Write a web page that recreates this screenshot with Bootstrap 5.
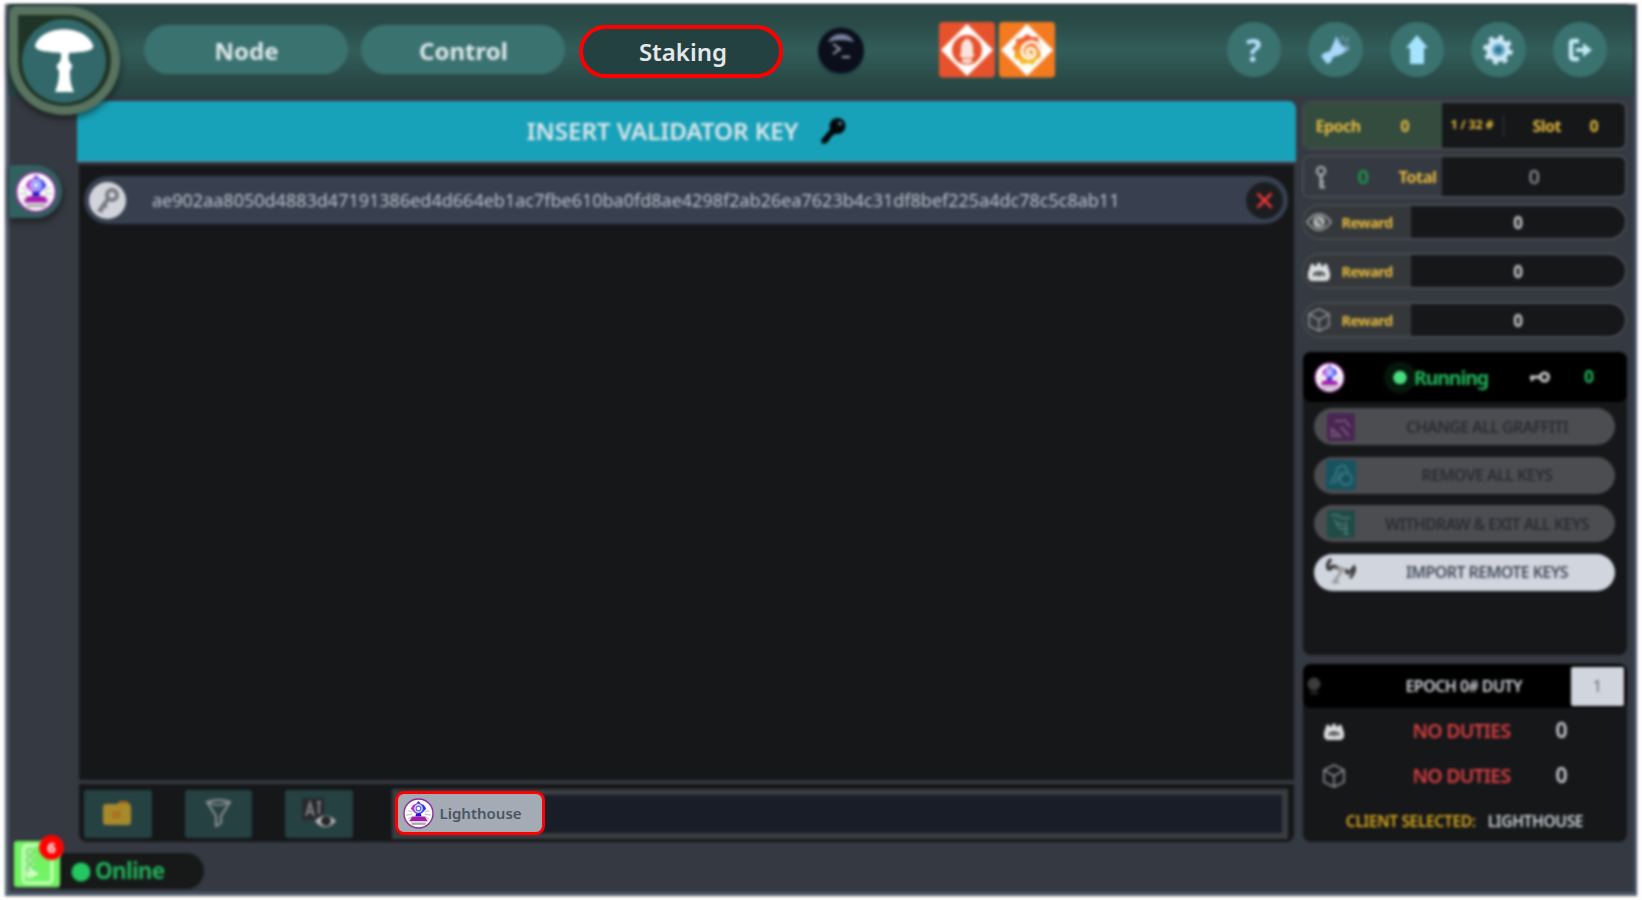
<!DOCTYPE html>
<html lang="en">
<head>
<meta charset="utf-8">
<title>Validator dashboard</title>
<link rel="stylesheet" href="https://cdn.jsdelivr.net/npm/bootstrap@5.3.0/dist/css/bootstrap.min.css">
<script src="https://cdn.jsdelivr.net/npm/bootstrap@5.3.0/dist/js/bootstrap.bundle.min.js"></script>
<style>
body{background:#fdfdfd;height:900px;overflow:hidden;padding:4px 5px 4px 5px;font-family:"Noto Sans",sans-serif;line-height:1;color:#d1d5db}
.soft{filter:blur(1.45px)}
.shell{height:892px;position:relative;isolation:isolate}
.shell::before{content:"";position:absolute;inset:0;z-index:-2;background:#353941;border:1px solid #4b5563;border-left:4px solid #556172;border-right:3px solid #4a5364;border-bottom:4px solid #4f5b6b;filter:blur(1.45px)}
.topbar{height:92px;position:relative;padding-left:139px;z-index:2}
.topbar::before{content:"";position:absolute;inset:1px 4px 0 4px;z-index:-1;background:linear-gradient(#294845 0,#294a47 18%,#325d5a 50%,#294a47 82%,#264442);border-radius:0 8px 0 0;filter:blur(1.45px)}
.brand{position:absolute;left:4px;top:2px;width:111px;height:109px;background:#1f3426;border:9px solid #58735f;border-radius:8px 56px 56px 56px;box-shadow:0 3px 7px #0009}
.brand svg{position:absolute;left:3px;top:3px}
.tabpill{width:204px;height:49px;border-radius:25px;background:#3a7270;font-size:24px;font-weight:700;color:#e0e9ec;margin-top:21px;padding:2px 0 0 1px}
.tabon{height:53px;border:4px solid red;border-radius:27px;background:#244141;color:#e5e7eb;font-weight:600;padding:0 0 0 4px}
.term{width:48px;height:48px;margin-top:23px}
.tile{width:56px;height:56px;margin-top:18px}
.tools{position:absolute;right:30px;top:18px;gap:27px}
.round{width:54.5px;height:55px;border-radius:50%;background:#3a7270}
.rail{width:72px;flex:none}
.tab-side{width:53px;height:53px;margin:69px 0 0 4px;background:#32605f;border-radius:0 27px 27px 0;box-shadow:1px 4px 6px #0007}
.center{width:1219px;flex:none}
.banner{height:61px;margin-top:5px;background:#18a2b9;border-radius:0 8px 0 0;color:#e0e7ec;font-size:24.2px;font-weight:600;letter-spacing:-.07px;border-bottom:1px solid #6b8494}
.list{height:615px;margin:3px 0 0 2px;width:1215px;background:#151719;padding:11px 6px 0 5px}
.keyrow{height:48px;background:#384050;border-radius:24px;padding:0 5px;font-size:18px;color:#bcc3cd}
.disc{width:37px;height:37px;border-radius:50%;background:#d1d5db;flex:none}
.foot{height:58px;width:1215px;margin:4px 0 0 2px;position:relative;padding:5px 6px 0 5px}
.foot::before{content:"";position:absolute;inset:0;z-index:-1;background:#151719;border-radius:0 0 8px 8px;filter:blur(1.45px)}
.tool{width:67.5px;height:48px;background:#264142;border-radius:3px;margin-right:33px;margin-top:1px}
.field{flex:1;position:relative;height:50px;margin-left:6px;padding:2px 0 0 3px}
.field::before{content:"";position:absolute;inset:0;z-index:-1;background:#181d27;border:6px solid #3b3d41;filter:blur(1.45px)}
.chip{width:150px;height:44px;border:3.5px solid red;border-radius:9px;background:#a4abb5;color:#4b5563;font-size:15px;font-weight:600;padding-left:5px}
.side{width:325px;margin:5px 0 0 5.500px;flex:none}
.stat{border:2px solid #484b52;border-radius:8px;background:#151719;overflow:hidden;font-weight:700;color:#e5ba3e}
.stat>div:first-child{width:138px;background:#353941}
.tight{letter-spacing:-.55px}
.pill{height:36px;border-radius:18px;color:#cdd0d4;font-size:17px;letter-spacing:-1px}
.pill>div:last-child{padding-top:1px}
.stat.pill>div:first-child{width:107px;background:#35383b;color:#e5ba3e;font-size:14.5px;letter-spacing:-.55px}
.panel{background:#151719;border-radius:8px;width:324px;margin-left:1px}
.phead{background:#000;border-radius:8px}
.act{height:37px;border-radius:19px;background:#4c4d51;color:#292b30;font-size:16px;letter-spacing:-.6px;font-weight:600;margin:0 12px 11.6px 11px;padding-left:12px;display:flex;align-items:center}
.act svg{flex:none}
.act span{flex:1;text-align:center;padding-left:4px}
.live{background:#d1d5de;color:#3f4957}
.duty{height:45px;font-size:19.5px;letter-spacing:-.75px;font-weight:600;color:#da3e40}
.online{position:absolute;left:54px;top:849px;width:145px;height:36px;border-radius:0 18px 18px 0;background:#161918;color:#22ae59;font-size:22.5px;letter-spacing:-.75px;font-weight:700;padding:1px 0 0 12px}
.note{position:absolute;left:9px;top:837px}
.six{position:absolute;left:34px;top:831px;width:25px;height:25px;border-radius:50%;background:red;color:#fff;font-size:15px;font-weight:700}
</style>
</head>
<body>
<svg width="0" height="0" class="position-absolute">
<symbol id="lh" viewBox="0 0 40 40"><circle cx="20" cy="20" r="18.700" fill="#fff" stroke="#8f2c9c" stroke-width="1.800"/><path d="M6 16l6 2M4 22l8-1M34 16l-6 2M36 22l-8-1M7 27l5-3M33 27l-5-3" stroke="#ccc" stroke-width="1.800"/><path d="M20 4l3 3h-6z" fill="#4a2fc8"/><path d="M20 6l-7 3-3 5 5 5 5 3z" fill="#b535d8"/><path d="M20 6l7 3 3 5-5 5-5 3z" fill="#3a35f2"/><circle cx="20" cy="13.500" r="5.600" fill="#d5daff"/><circle cx="20" cy="13.500" r="3" fill="#fff" stroke="#5a6af5" stroke-width="1.500"/><path d="M17 20h6l1 4h-8z" fill="#2418c0"/><path d="M12 24h16l4 6H8z" fill="#a51bac"/><path d="M10 31.500h20" stroke="#d9d9d9" stroke-width="2"/><path d="M11 33.500h18" stroke="#777" stroke-width="1.500"/></symbol>
<symbol id="castle" viewBox="0 0 24 22"><path d="M3 7l1-3h3v2h3V3h4v3h3V4h3l1 3 2 6v5l-3 3H4l-3-3v-5z" fill="#dcdddf"/><path d="M6 13q6-4 12 0v4l-3-2-3 2-3-2-3 2z" fill="#5b5d60"/></symbol>
<symbol id="cube" viewBox="0 0 24 26"><path d="M12 2l10 5v12l-10 5L2 19V7zM2 7l10 6 10-6M12 13v11" fill="none" stroke="#8b8e92" stroke-width="1.700"/></symbol>
</svg>
<div class="shell">
<header class="topbar d-flex">
  <div class="brand soft"><svg width="86" height="86" viewBox="0 0 86 86"><circle cx="43" cy="43" r="42" fill="#32686a"/><path d="M14 27C21 7 63 5 72 27c2 7-12 7-24 8-1 8 0 8 3 12 1 3-2 4-2 7 0 9 1 13 4 20H34c3-8 4-13 4-20 0-3-3-3-2-7 4-4 4-5 4-12-12-1-26-1-26-8z" fill="#fff"/></svg></div>
  <div class="tabpill soft d-flex align-items-center justify-content-center">Node</div>
  <div class="tabpill soft d-flex align-items-center justify-content-center" style="margin-left:13px">Control</div>
  <div class="tabpill tabon d-flex align-items-center justify-content-center" style="margin-left:14px">Staking</div>
  <svg class="term soft" style="margin-left:34px" viewBox="0 0 48 48"><circle cx="24" cy="27" r="23" fill="#24444a"/><circle cx="24" cy="23.500" r="23" fill="#0b0f1c"/><path d="M11 15q4-8 13-8t13 8q-13-4-26 0z" fill="#75819a"/><path d="M16 17l7 5-7 5M25 30h8" fill="none" stroke="#a2a5aa" stroke-width="2"/></svg>
  <svg class="tile soft" style="margin-left:74px" viewBox="0 0 56 56"><rect width="56" height="55.500" rx="4" fill="#e6522c"/><path d="M28 2l26 26-26 26L2 28z" fill="#fff"/><circle cx="28" cy="28" r="15" fill="#e6522c"/><path d="M28 16q6 4 6 10v6H22v-6q0-6 6-10zM20 32h16l-3 4H23zM23 37h10v3l-5 2-5-2z" fill="#fbe3dc"/></svg>
  <svg class="tile soft" style="margin-left:4px" viewBox="0 0 56 56"><defs><linearGradient id="gf" x2="0" y2="1"><stop stop-color="#ed4e31"/><stop offset="1" stop-color="#fbc51d"/></linearGradient></defs><rect width="56" height="55.500" rx="4" fill="#f47a20"/><path d="M28 2l26 26-26 26L2 28z" fill="#fff"/><path d="M28 12l5 3 6 0 1 6 3 4-2 4 1 6-5 3-3 5-5-2-6 2-3-5-5-2 1-6-3-4 4-4v-5l6-1z" fill="url(#gf)"/><path d="M41 28c-2-13-19-9-18 2 1 8 12 8 13 1 0-6-8-6-8-1 0 2 2 3 4 2" fill="none" stroke="#fff" stroke-width="3"/></svg>
  <div class="tools d-flex">
    <div class="round soft d-flex align-items-center justify-content-center" style="color:#b8e0fd;font-size:32px;font-weight:700">?</div>
    <div class="round soft"><svg width="54" height="55" viewBox="0 0 54 55"><path d="M28 14q5 12 12 13-3 5-15 8l-2 5-4 2-6-8 3-3 6-2 5-11z" fill="#a9d8fc"/><path d="M29 16q3 9 11 11l-5 3" fill="none" stroke="#8fb4dd" stroke-width="2"/><path d="M34 18l1-4M37 20l4-4M37 24l4-1" stroke="#7395a8" stroke-width="2"/></svg></div>
    <div class="round soft"><svg width="54" height="55" viewBox="0 0 54 55"><path d="M27 13l11 13h-4v16H20V26h-4z" fill="#a5e4ff"/></svg></div>
    <div class="round soft"><svg width="54" height="55" viewBox="0 0 54 55"><circle cx="27" cy="28" r="11.500" fill="#d0e9f6"/><circle cx="27" cy="28" r="12.500" fill="none" stroke="#d0e9f6" stroke-width="4.500" stroke-dasharray="4.800 5.020"/><circle cx="27.500" cy="28" r="5.500" fill="#347c90" stroke="#7ab8dc" stroke-width="3"/></svg></div>
    <div class="round soft"><svg width="54" height="55" viewBox="0 0 54 55"><path d="M26 19h-6q-2 0-2 2v13q0 3 3 3h5" fill="none" stroke="#c4eaf5" stroke-width="4.500"/><path d="M23 26h7v-5l9 7-9 7v-5h-7z" fill="#c4eaf5"/></svg></div>
  </div>
</header>
<div class="d-flex">
  <nav class="rail"><div class="tab-side soft d-flex align-items-center"><svg width="42" height="42" style="margin-left:6px"><use href="#lh"/></svg></div></nav>
  <main class="center">
    <div class="banner soft d-flex align-items-center justify-content-center"><span style="margin-left:3px">INSERT VALIDATOR KEY</span><svg width="28" height="28" viewBox="0 0 28 28" style="margin-left:21px;margin-right:2px"><circle cx="18.500" cy="9" r="8" fill="#05080a"/><circle cx="21" cy="6.500" r="2" fill="#427986"/><path d="M13 10l6 5-6 4-5 7-5 1-1-4z" fill="#05080a"/></svg></div>
    <section class="list soft">
      <div class="keyrow d-flex align-items-center">
        <div class="disc"><svg width="37" height="37" viewBox="0 0 37 37"><circle cx="23" cy="13" r="5" fill="none" stroke="#77797e" stroke-width="4"/><path d="M19 17l-8 11 3 1M14 23l4 2" fill="none" stroke="#77797e" stroke-width="4"/></svg></div>
        <span class="keytext" style="margin-left:26px">ae902aa8050d4883d47191386ed4d664eb1ac7fbe610ba0fd8ae4298f2ab26ea7623b4c31df8bef225a4dc78c5c8ab11</span>
        <div class="disc ms-auto" style="background:#1c1d20"><svg width="37" height="37"><path d="M11.500 11.500l14 14M25.500 11.500L11.500 25.500" stroke="#e53636" stroke-width="3"/></svg></div>
      </div>
    </section>
    <div class="foot d-flex">
      <div class="tool soft"><svg width="67" height="47" viewBox="0 0 67 47"><path d="M19 17q0-3 3-3h11l3-3h7l2 3q2 0 2 3v15q0 3-3 3H22q-3 0-3-3z" fill="#a68a2c"/><path d="M34 14l3-3h6l2 3z" fill="#a76618"/><path d="M28 21h9v7h-9z" fill="#a87420"/></svg></div>
      <div class="tool soft"><svg width="67" height="47" viewBox="0 0 67 47"><path d="M22 12q12-4 23 0l-9 14v7l-5 3V26z" fill="none" stroke="#909394" stroke-width="2"/><path d="M22 12q11 6 23 0" fill="none" stroke="#909394" stroke-width="1.500"/></svg></div>
      <div class="tool soft"><svg width="67" height="47" viewBox="0 0 67 47"><path d="M17 8h22v22H17z" fill="#27282b"/><path d="M21 26l4-13 4 13M22 22h6M34 12v12M32 12h4" fill="none" stroke="#85878b" stroke-width="2"/><path d="M30 31q10-11 21 0-11 12-21 0z" fill="#b9b9bb"/><circle cx="41" cy="31" r="5" fill="#232526"/></svg></div>
      <div class="field"><div class="chip d-flex align-items-center"><svg width="31" height="31"><use href="#lh"/></svg><span style="margin-left:6px">Lighthouse</span></div></div>
    </div>
  </main>
  <aside class="side">
    <div class="stat soft d-flex tight" style="height:49px;font-size:16px"><div class="d-flex align-items-center" style="background:#344c3e"><span style="margin-left:12px;width:85px">Epoch</span>0</div><div class="d-flex align-items-center"><span style="font-size:12.500px;letter-spacing:-.2px;margin-left:9px;width:52px">1 / 32 #</span><i style="width:1px;height:22px;background:#393b42"></i><span style="margin-left:29px;width:57px">Slot</span>0</div></div>
    <div class="stat soft d-flex tight" style="height:43px;margin-top:5px;font-size:17px"><div class="d-flex align-items-center"><svg width="14" height="24" viewBox="0 0 14 24" style="margin-left:10px"><circle cx="7" cy="6" r="4" fill="none" stroke="#a6a8ab" stroke-width="2.500"/><path d="M7 10v12h4M7 17h3" fill="none" stroke="#a6a8ab" stroke-width="3"/></svg><span style="color:#1c9a4c;margin-left:30px;width:41px;font-size:20px;font-weight:600">0</span><span style="font-size:16.500px;padding-top:2px">Total</span></div><div class="flex-fill d-flex align-items-center justify-content-center" style="color:#9598a0;font-size:20px;font-weight:500;padding:1px 0 0 2px">0</div></div>
    <div class="stat pill soft d-flex" style="margin-top:6px"><div class="d-flex align-items-center"><svg width="26" height="18" viewBox="0 0 26 18" style="margin-left:2px"><path d="M1 9q12-16 24 0-12 16-24 0z" fill="none" stroke="#989a9c" stroke-width="2"/><circle cx="13" cy="9" r="6" fill="#b3b4b5"/><path d="M11 6l5 6" stroke="#555" stroke-width="2"/></svg><span style="margin-left:10px">Reward</span></div><div class="flex-fill d-flex align-items-center justify-content-center">0</div></div>
    <div class="stat pill soft d-flex" style="margin-top:13px"><div class="d-flex align-items-center"><svg width="24" height="22" style="margin-left:3px"><use href="#castle"/></svg><span style="margin-left:11px">Reward</span></div><div class="flex-fill d-flex align-items-center justify-content-center">0</div></div>
    <div class="stat pill soft d-flex" style="margin-top:13px"><div class="d-flex align-items-center"><svg width="26" height="26" style="margin-left:2px"><use href="#cube"/></svg><span style="margin-left:10px">Reward</span></div><div class="flex-fill d-flex align-items-center justify-content-center">0</div></div>
    <section class="panel soft" style="height:303px;margin-top:14px">
      <div class="phead d-flex align-items-center" style="height:50px;margin-bottom:6px;color:#22b65c;font-weight:700"><svg width="31" height="31" style="margin-left:11px"><use href="#lh"/></svg><svg width="33" height="33" style="margin-left:38px"><circle cx="17" cy="16.500" r="16" fill="#05180b"/><circle cx="17" cy="16.500" r="6.800" fill="#4ade80"/></svg><span style="font-size:19.500px;width:115px;letter-spacing:-1.100px;padding-top:2px;margin-left:-1.500px">Running</span><svg width="21" height="14" viewBox="0 0 21 14"><path d="M1 7h12M3 7v4" stroke="#ccc" stroke-width="3"/><circle cx="15.500" cy="7" r="4" fill="none" stroke="#ccc" stroke-width="3"/></svg><span style="margin-left:34px;font-size:17.500px;letter-spacing:-1px">0</span></div>
      <div class="act"><svg width="30" height="30" viewBox="0 0 30 30"><rect x="1" y="1" width="28" height="28" rx="3" fill="#492651"/><path d="M6 17v7h8zM9 9h8M18 7l6 8M15 15l8 9" fill="none" stroke="#76567a" stroke-width="2"/></svg><span>CHANGE ALL GRAFFITI</span></div>
      <div class="act"><svg width="30" height="30" viewBox="0 0 30 30"><rect width="30" height="30" rx="3" fill="#17535f"/><path d="M4 24l6-10q1-10 9-8l3 7M8 24l8-12" fill="none" stroke="#3b7481" stroke-width="2"/><circle cx="20" cy="19" r="6" fill="none" stroke="#3b7481" stroke-width="2"/></svg><span>REMOVE ALL KEYS</span></div>
      <div class="act"><svg width="30" height="30" viewBox="0 0 30 30"><rect x="1" y="1" width="28" height="28" rx="3" fill="#204b46"/><path d="M5 6h7l3 3h9M8 10l6 10h8M20 12v12M11 14l7 2M17 25h6" fill="none" stroke="#46716c" stroke-width="2"/></svg><span>WITHDRAW &amp; EXIT ALL KEYS</span></div>
      <div class="act live"><svg width="30" height="30" viewBox="0 0 30 30"><path d="M5 2q-5 6-3 9t5-3M8 9l6 3" fill="none" stroke="#333" stroke-width="3.500"/><path d="M11 10l6 2-4 6-5 7h5" fill="none" stroke="#999" stroke-width="3"/><path d="M21 12q-2 6 3 3l4-5q2 4-4 11" fill="none" stroke="#3a3a3a" stroke-width="3"/></svg><span>IMPORT REMOTE KEYS</span></div>
    </section>
    <section class="panel soft" style="height:178px;margin-top:9px">
      <div class="phead d-flex align-items-center" style="height:44px;font-size:16px;letter-spacing:-.57px;font-weight:600"><svg width="14" height="20" style="margin-left:4px"><circle cx="7" cy="8" r="6.500" fill="#3c3c3c"/><path d="M3 17h8" stroke="#252525" stroke-width="3"/></svg><span style="margin-left:85px;width:165px">EPOCH 0# DUTY</span><div class="d-flex align-items-center justify-content-center" style="width:53px;height:39px;background:#d1d5de;color:#5f6675;border-radius:2px;font-weight:400">1</div></div>
      <div class="duty d-flex align-items-center"><svg width="24" height="20" style="margin-left:19px"><use href="#castle"/></svg><span style="margin-left:67px;width:143px">NO DUTIES</span><span style="color:#d0d3d9;font-size:21px">0</span></div>
      <div class="duty d-flex align-items-center"><svg width="26" height="26" style="margin-left:18px"><use href="#cube"/></svg><span style="margin-left:66px;width:143px">NO DUTIES</span><span style="color:#d0d3d9;font-size:21px">0</span></div>
      <div class="d-flex align-items-center justify-content-center" style="height:46px;font-size:15.600px;letter-spacing:-.38px;font-weight:600;gap:12px;padding-top:2px"><span style="color:#dcaa1c">CLIENT SELECTED:</span><span>LIGHTHOUSE</span></div>
    </section>
  </aside>
</div>
<div class="online soft d-flex align-items-center"><svg width="20" height="20" style="margin-right:4px"><circle cx="10" cy="10" r="9.500" fill="#24c760"/></svg>Online</div>
<svg class="note soft" width="46" height="46" viewBox="0 0 46 46"><rect width="46" height="46" rx="3" fill="#73f263"/><rect x="9" y="4" width="29" height="38" rx="4" fill="none" stroke="#c6ffb9" stroke-width="3"/><path d="M11 6h9v30h-9z" fill="#b6fba9"/><circle cx="16" cy="11" r="3" fill="none" stroke="#67cf5d" stroke-width="1.500"/><circle cx="16" cy="19" r="3" fill="none" stroke="#67cf5d" stroke-width="1.500"/><circle cx="16" cy="27" r="3" fill="none" stroke="#67cf5d" stroke-width="1.500"/><path d="M14 38l11-5-9-6z" fill="#d6ffcd"/></svg>
<div class="six soft d-flex align-items-center justify-content-center">6</div>
</div>
</body>
</html>
